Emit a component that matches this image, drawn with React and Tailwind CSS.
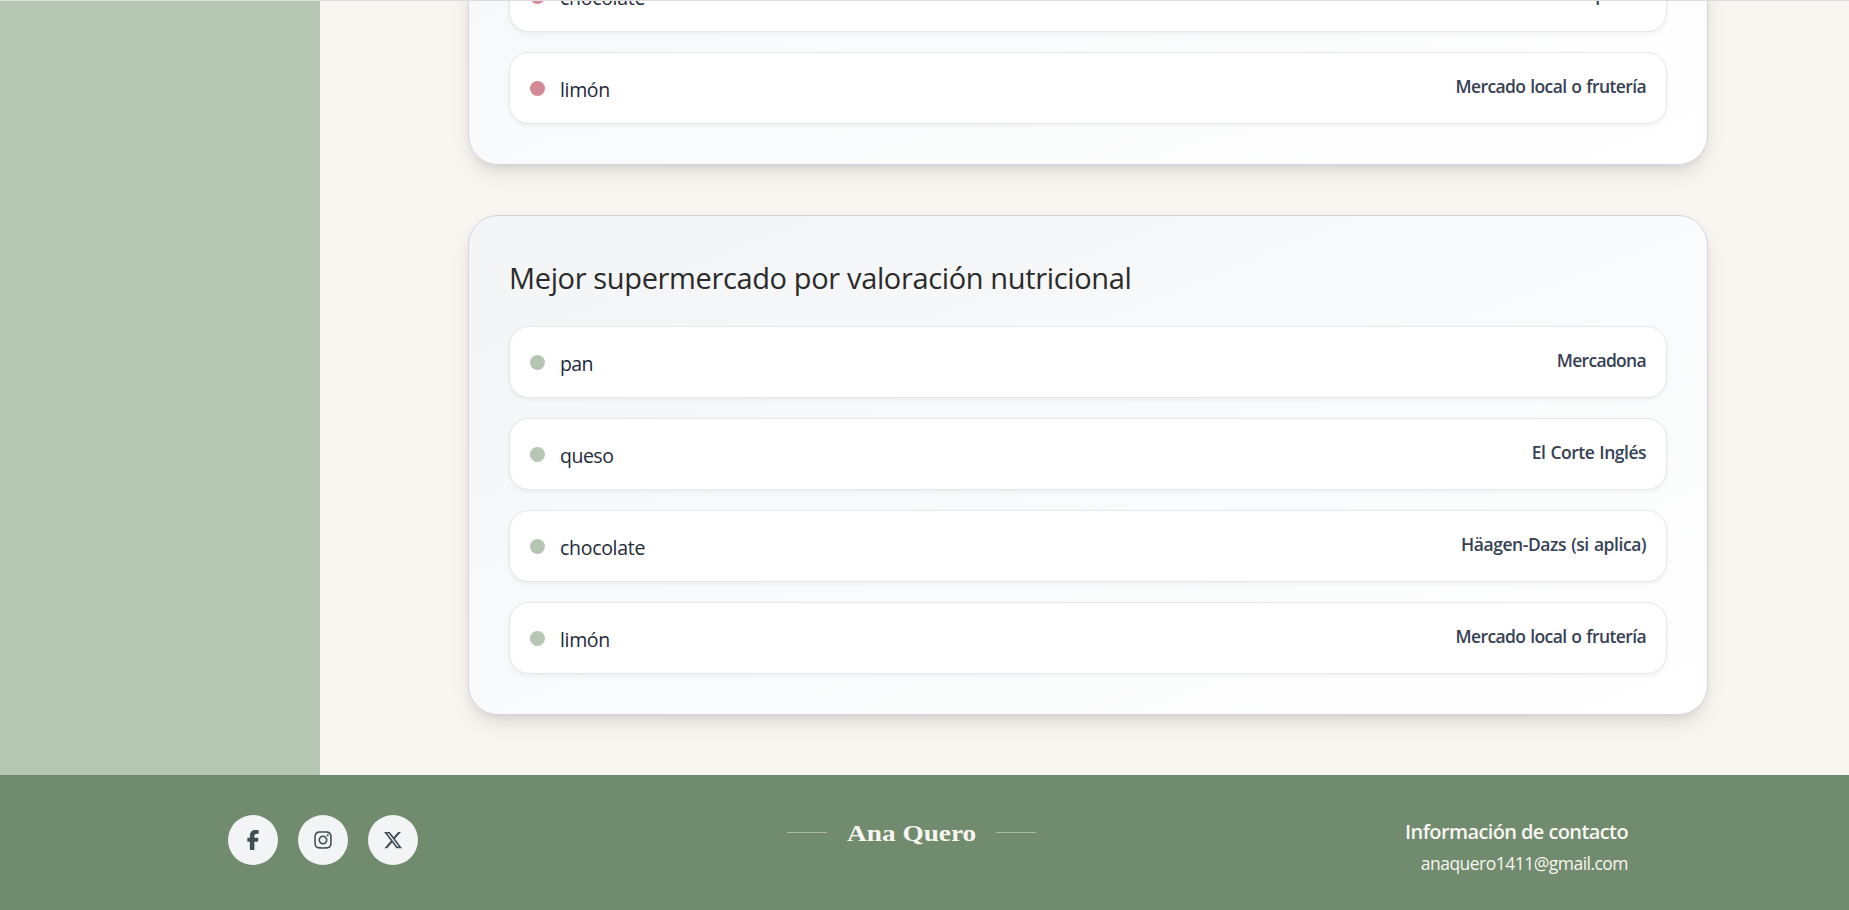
import React from "react";
import { FaFacebookF, FaInstagram, FaXTwitter } from "react-icons/fa6";

function Item({ name, store, dot, nameClass, storeClass }) {
  return (
    <li className="flex h-[72px] shrink-0 items-center justify-between rounded-[20px] border border-gray-200 bg-white px-5 shadow-[0_2px_4px_rgba(0,0,0,0.05)]">
      <div className="flex items-center gap-[15px]">
        <span className={`size-[15px] rounded-full ${dot}`} />
        <span className={`pt-1 text-[19.5px] leading-[30px] text-gray-800 ${nameClass}`}>{name}</span>
      </div>
      <span className={`pb-[3px] text-[17.5px] leading-[27px] font-semibold text-gray-700 [word-spacing:1px] ${storeClass}`}>{store}</span>
    </li>
  );
}

const CARD =
  "flex h-[500px] w-[1240px] shrink-0 flex-col justify-end rounded-[30px] border border-gray-300 bg-[linear-gradient(to_bottom_right,#f3f4f6,#f9fafb,#ffffff)] p-10 shadow-[0_10px_20px_-3px_rgba(0,0,0,0.12),0_4px_6px_-2px_rgba(0,0,0,0.05)]";

const names = {
  pan: "tracking-[-0.6px]",
  queso: "tracking-[-0.5px]",
  chocolate: "tracking-[-0.3px]",
  limón: "tracking-[-0.35px]",
};

const cheapest = [
  { name: "chocolate", store: "Hipercor", storeClass: "tracking-[-0.8px]" },
  { name: "limón", store: "Mercado local o frutería", storeClass: "tracking-[-0.62px]" },
];

const healthiest = [
  { name: "pan", store: "Mercadona", storeClass: "tracking-[-0.69px]" },
  { name: "queso", store: "El Corte Inglés", storeClass: "tracking-[-0.5px]" },
  { name: "chocolate", store: "Häagen-Dazs (si aplica)", storeClass: "tracking-[-0.44px]" },
  { name: "limón", store: "Mercado local o frutería", storeClass: "tracking-[-0.62px]" },
];

const socials = [FaFacebookF, FaInstagram, FaXTwitter];

export default function App() {
  return (
    <div className="flex h-[910px] w-[1849px] flex-col overflow-hidden border-t border-[#dcdcdc] bg-[#f9f5f0] font-['Open_Sans','Noto_Sans',sans-serif]">
      <div className="flex h-[774px] shrink-0">
        <aside className="w-80 shrink-0 bg-[#b5c7b3]" />
        <main className="flex flex-col justify-end gap-[50px] overflow-hidden pr-[141px] pb-[60px] pl-[148px]">
          <section className={CARD}>
            <ul className="flex flex-col gap-5">
              {cheapest.map((item) => (
                <Item key={item.name} {...item} nameClass={names[item.name]} dot="bg-[#d48a94]" />
              ))}
            </ul>
          </section>
          <section className={CARD}>
            <h2 className="mb-[26px] text-[29px] leading-[45px] tracking-[-0.36px] whitespace-nowrap text-[#2b2b2b]">
              Mejor supermercado por valoración nutricional
            </h2>
            <ul className="flex flex-col gap-5">
              {healthiest.map((item) => (
                <Item key={item.name} {...item} nameClass={names[item.name]} dot="bg-[#b5c7b3]" />
              ))}
            </ul>
          </section>
        </main>
      </div>
      <footer className="flex h-[135px] shrink-0 items-start bg-[#718b6f] pt-10 pr-[221px] pl-[228px] text-[#f9f5f0]">
        <div className="flex w-[559px] gap-5">
          {socials.map((Icon, i) => (
            <a key={i} className="flex size-[50px] items-center justify-center rounded-full bg-gray-100 text-[#3e4e55]">
              <Icon size={20} />
            </a>
          ))}
        </div>
        <div className="flex items-center gap-5">
          <span className="h-px w-10 bg-[#adb9a9]" />
          <span className="w-[129px] origin-left scale-x-[1.138] pt-px font-['Liberation_Serif',serif] text-[24px] leading-[34px] font-bold whitespace-nowrap">
            Ana Quero
          </span>
          <span className="h-px w-10 bg-[#adb9a9]" />
        </div>
        <div className="ml-auto flex flex-col items-end">
          <span className="text-[20px] leading-[33px] font-semibold tracking-[-0.6px]">Información de contacto</span>
          <span className="text-[17.5px] leading-[30px] tracking-[-0.53px]">anaquero1411@gmail.com</span>
        </div>
      </footer>
    </div>
  );
}
